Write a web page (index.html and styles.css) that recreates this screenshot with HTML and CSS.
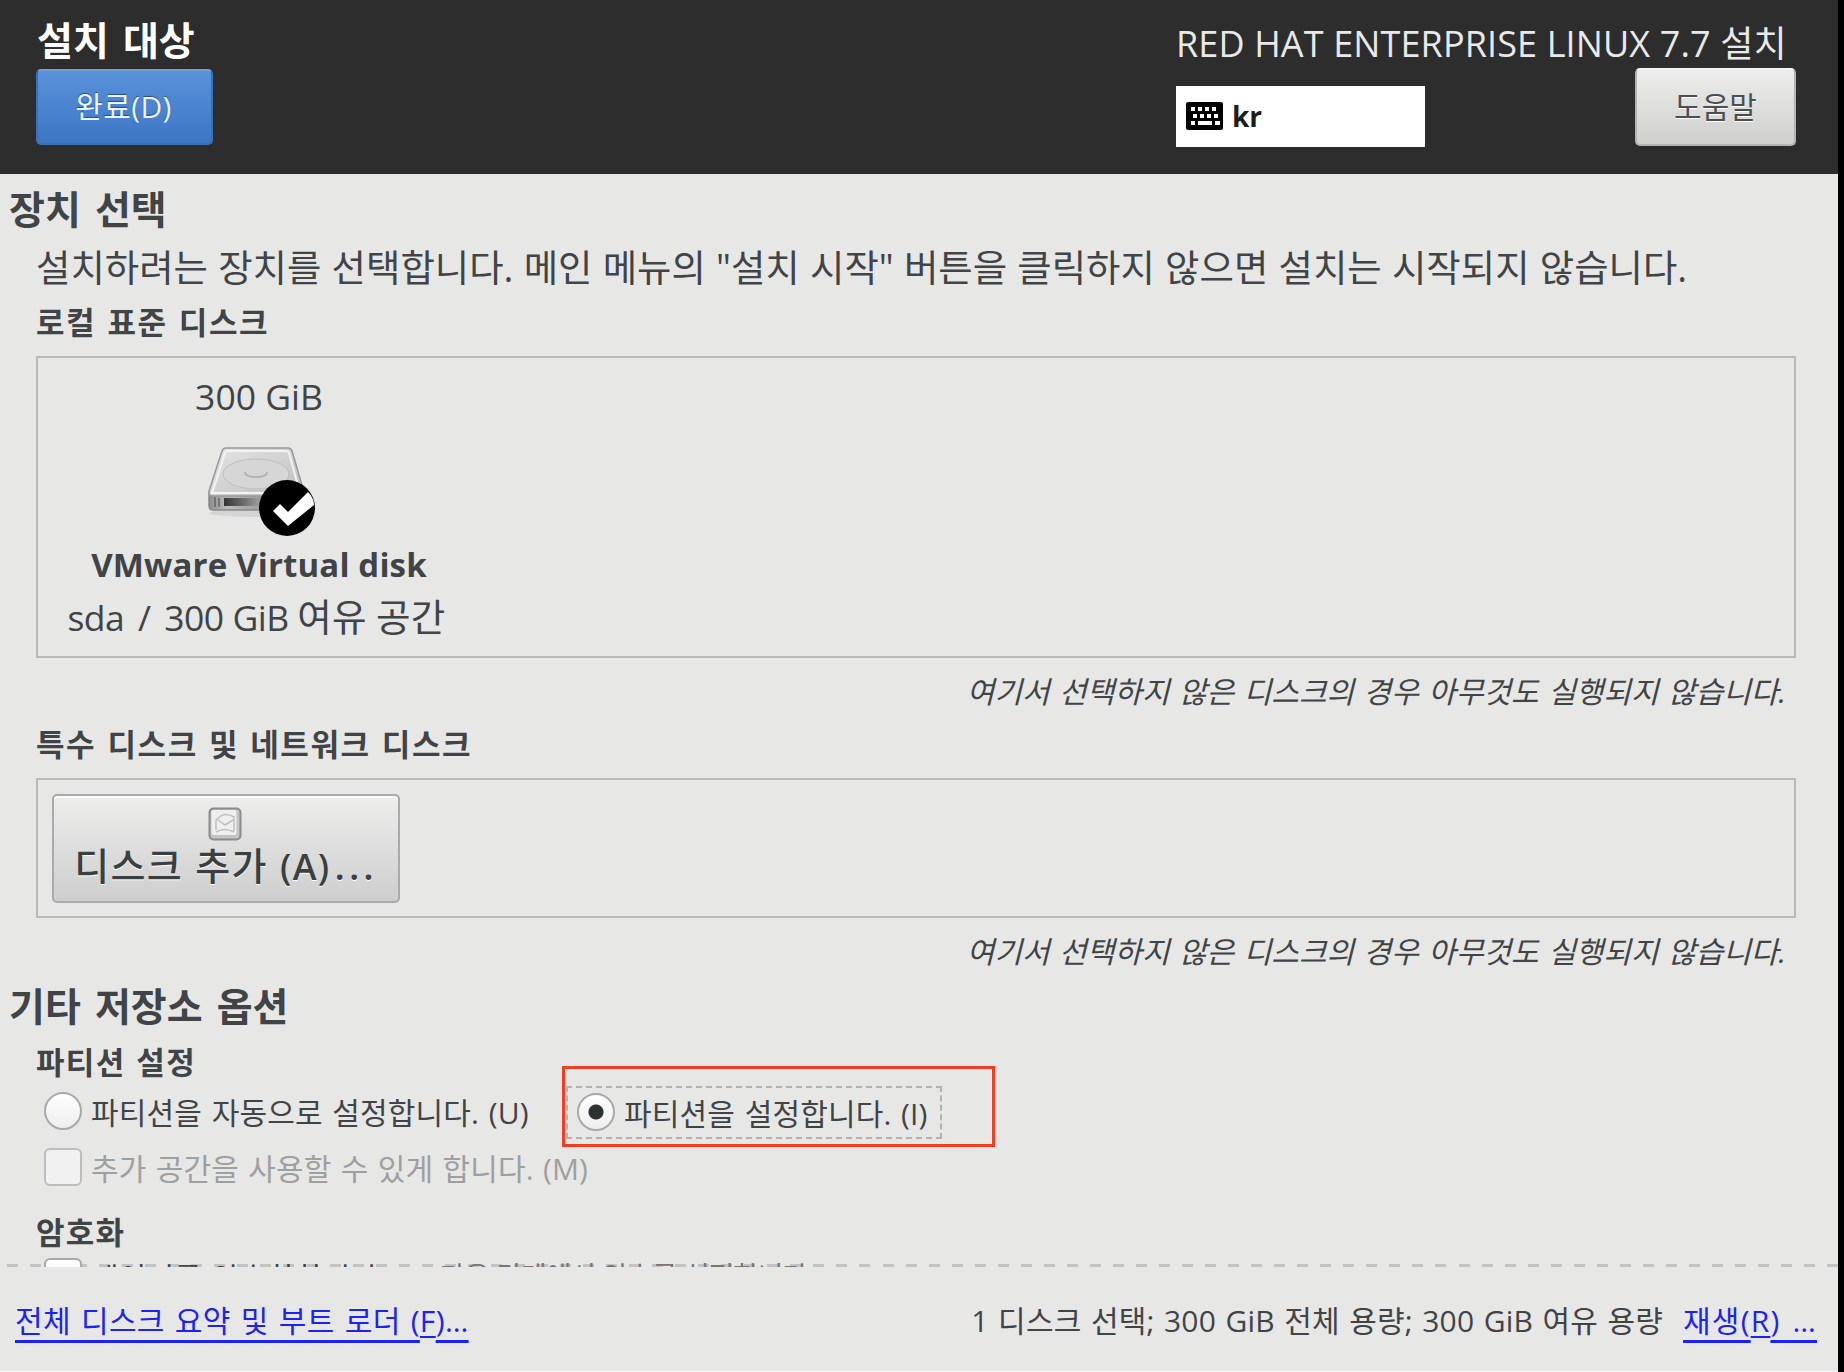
FILE: index.html
```html
<!DOCTYPE html>
<html lang="ko">
<head>
<meta charset="utf-8">
<title>설치 대상</title>
<link rel="stylesheet" href="styles.css">
</head>
<body>
<div class="installer">
  <header class="topbar">
    <div class="topbar-left">
      <h1 class="title"><span class="t">설치 대상</span></h1>
      <button class="btn btn-done"><span class="t">완료(D)</span></button>
    </div>
    <div class="topbar-right">
      <div class="product"><span class="t">RED HAT ENTERPRISE LINUX 7.7 설치</span></div>
      <div class="tools">
        <div class="layout-box">
          <svg class="kbd" viewBox="0 0 37 28"><rect width="37" height="28" rx="2" fill="#000"/><g fill="#fff"><path d="M5 5h4v4H5zM12 5h4v4h-4zM19 5h4v4h-4zM26 5h4v4h-4zM7 12h4v4H7zM14 12h4v4h-4zM21 12h4v4h-4zM28 12h4v4h-4zM5 19h4v4H5zM12 19h14v4H12zM29 19h5v4h-5z"/></g></svg>
          <span class="t">kr</span>
        </div>
        <button class="btn btn-help"><span class="t">도움말</span></button>
      </div>
    </div>
  </header>
  <main class="content">
    <h2 class="section-title"><span class="t">장치 선택</span></h2>
    <p class="desc"><span class="t">설치하려는 장치를 선택합니다. 메인 메뉴의 "설치 시작" 버튼을 클릭하지 않으면 설치는 시작되지 않습니다.</span></p>
    <h3 class="sub sub-local"><span class="t">로컬 표준 디스크</span></h3>
    <div class="panel panel-local">
      <div class="disk">
        <div class="disk-size"><span class="t">300 GiB</span></div>
        <svg class="disk-icon" viewBox="0 0 112 96">
          <defs>
            <linearGradient id="top" x1="0" y1="0" x2="1" y2="1"><stop offset="0" stop-color="#e4e4e4"/><stop offset=".5" stop-color="#d2d2d2"/><stop offset="1" stop-color="#bdbdbd"/></linearGradient>
            <linearGradient id="front" x1="0" y1="0" x2="1" y2="0"><stop offset="0" stop-color="#8f8f8f"/><stop offset=".2" stop-color="#bbb"/><stop offset="1" stop-color="#777"/></linearGradient>
            <linearGradient id="slot" x1="0" y1="0" x2="1" y2="0"><stop offset="0" stop-color="#333"/><stop offset="1" stop-color="#aaa"/></linearGradient>
          </defs>
          <ellipse cx="50" cy="67" rx="48" ry="4" fill="#000" opacity=".08"/>
          <path d="M2 48h94v12q0 4-4 4H6q-4 0-4-4z" fill="url(#front)" stroke="#888" stroke-width="1.500"/>
          <path d="M19 2h62q3 0 4 3L97 46q0 4-4 4H6q-5 0-4-5L15 5q1-3 4-3z" fill="url(#top)" stroke="#989898" stroke-width="1.500"/>
          <path d="M20 5h59q2 0 3 2l11 40H5L18 7q.5-2 2-2z" fill="none" stroke="#f3f3f3" stroke-width="2"/>
          <ellipse cx="49" cy="28" rx="33" ry="15" fill="#d6d6d6" stroke="#bfbfbf"/>
          <path d="M38 26q0 5 11 5t11-5" fill="none" stroke="#aaa" stroke-width="1.500"/>
          <path d="M17 52h40v8H17z" fill="url(#slot)"/>
          <path d="M8 51v10M12 52v9" stroke="#666" stroke-width="1.500"/>
          <circle cx="80" cy="62" r="28" fill="#000"/>
          <path d="M66 65l7-7 8 8 20-20q6 6 6 13L81 80z" fill="#fff"/>
        </svg>
        <div class="disk-name"><span class="t">VMware Virtual disk</span></div>
        <div class="disk-info"><span class="t">sda <span class="slash">/</span> 300 GiB <span class="free">여유 공간</span></span></div>
      </div>
    </div>
    <p class="note"><span class="t">여기서 선택하지 않은 디스크의 경우 아무것도 실행되지 않습니다.</span></p>
    <h3 class="sub sub-special"><span class="t">특수 디스크 및 네트워크 디스크</span></h3>
    <div class="panel panel-special">
      <button class="btn btn-add">
        <svg class="add-icon" viewBox="0 0 34 34"><rect x="1.500" y="1.500" width="31" height="31" rx="4" fill="#c4c4c4" stroke="#8c8c8c" stroke-width="2"/><rect x="3.500" y="3" width="25" height="25" rx="2" fill="#efefef"/><path d="M8 23V13q8-9 18-3M9 12l8 6 8-5M8 25q8-5 18 0M26 9v15" fill="none" stroke="#c0c0c0" stroke-width="1.500"/></svg>
        <span class="t">디스크 추가 <span class="key">(A)</span><span class="dots">...</span></span>
      </button>
    </div>
    <p class="note"><span class="t">여기서 선택하지 않은 디스크의 경우 아무것도 실행되지 않습니다.</span></p>
    <h2 class="section-title other"><span class="t">기타 저장소 옵션</span></h2>
    <h3 class="sub sub-part"><span class="t">파티션 설정</span></h3>
    <div class="options">
      <label class="option opt-auto"><i class="radio"></i><span class="t">파티션을 자동으로 설정합니다. (U)</span></label>
      <div class="highlight">
        <label class="option opt-manual"><i class="radio on"></i><span class="t">파티션을 설정합니다. (I)</span></label>
      </div>
    </div>
    <label class="option opt-extra disabled"><i class="check"></i><span class="t">추가 공간을 사용할 수 있게 합니다. (M)</span></label>
    <h3 class="sub sub-crypt"><span class="t">암호화</span></h3>
    <label class="option opt-crypt"><i class="check"></i><span class="t">데이터를 암호화합니다. (E)</span><small class="hint">다음 단계에서 암호를 설정합니다.</small></label>
  </main>
  <footer class="footer">
    <a class="link link-summary"><span class="t">전체 디스크 요약 및 부트 로더 (<u>F</u>)…</span></a>
    <div class="status">
      <span class="t status-text">1 디스크 선택; 300 GiB 전체 용량; 300 GiB 여유 용량</span>
      <a class="link link-reload"><span class="t">재생(<u>R</u>) …</span></a>
    </div>
  </footer>
</div>
</body>
</html>
```
FILE: styles.css
```css
* { box-sizing: border-box; }
body {
  margin: 0;
  width: 1844px;
  height: 1372px;
  background: #000;
  color: #414446;
  font-family: "Open Sans", "Noto Sans CJK KR", sans-serif;
  overflow: hidden;
}
h1, h2, h3, p { margin: 0; }
.t, .hint { white-space: nowrap; }

.installer {
  width: 1838px;
  height: 1372px;
  background: #e7e7e6;
  border-bottom: 1px solid #f8f8f8;
  display: flex;
  flex-direction: column;
}

/* header */
.topbar {
  flex: none;
  height: 174px;
  background: #2d2d2d;
  padding: 16px 42px 0 36px;
  display: flex;
  justify-content: space-between;
}
.title {
  height: 53px;
  line-height: 48px;
  font-size: 39px;
  font-weight: 700;
  word-spacing: 4px;
  color: #fff;
  padding-left: 1px;
}
.btn {
  display: flex;
  align-items: center;
  justify-content: center;
  padding: 0;
  font-family: inherit;
  border-radius: 5px;
}
.btn-done {
  width: 177px;
  height: 76px;
  padding: 0 2px 5px 0;
  font-size: 30px;
  letter-spacing: .4px;
  color: #eef4fb;
  background: linear-gradient(#5a92da, #3c76c4);
  border: 2px solid #3a70ba;
  border-top-color: #6f9fdc;
  text-shadow: 0 -1px 1px #234f8b;
}
.topbar-right { width: 620px; }
.product {
  height: 52px;
  line-height: 56px;
  font-size: 36px;
  letter-spacing: .12px;
  color: #e9e9e9;
}
.tools {
  display: flex;
  justify-content: space-between;
}
.layout-box {
  width: 249px;
  height: 61px;
  margin-top: 18px;
  padding: 0 0 2px 10px;
  background: #fff;
  color: #1d1d1d;
  display: flex;
  align-items: center;
  gap: 9px;
  font-size: 28px;
  font-weight: 700;
}
.kbd { width: 37px; height: 28px; }
.btn-help {
  width: 161px;
  height: 78px;
  padding-bottom: 4px;
  font-size: 30px;
  color: #4a5052;
  background: linear-gradient(#ededec, #cfcfcd);
  border: 2px solid #b4b4b2;
  border-top-color: #f5f5f5;
  text-shadow: 0 1px 0 #fff;
}

/* content */
.content {
  flex: none;
  height: 1093px;
  overflow: hidden;
  padding: 10px 42px 0 36px;
  background:
    repeating-linear-gradient(90deg, #c3c3c3 0 11px, transparent 11px 23.04px) 6.600px 1090px / 100% 3px no-repeat;
}
.section-title {
  height: 50px;
  line-height: 50px;
  margin-left: -27px;
  font-size: 39px;
  font-weight: 700;
  word-spacing: 4px;
}
.desc {
  height: 50px;
  line-height: 50px;
  margin-top: 9px;
  font-size: 37.400px;
  word-spacing: .5px;
}
.sub {
  height: 40px;
  line-height: 40px;
  font-size: 31px;
  font-weight: 700;
  letter-spacing: 1.600px;
  word-spacing: 1.500px;
}
.sub-local { margin-top: 9px; }
.panel {
  border: 2px solid #b9b9b9;
  width: 1760px;
}
.panel-local {
  height: 302px;
  margin-top: 14px;
  padding: 13px 0 0 20px;
}
.disk {
  width: 402px;
  display: flex;
  flex-direction: column;
  align-items: center;
}
.disk-size, .disk-info { height: 50px; line-height: 50px; font-size: 35.500px; }
.disk-icon { width: 112px; height: 96px; margin: 25px 0 0 7px; }
.disk-name {
  height: 50px;
  line-height: 50px;
  margin-top: -2px;
  font-size: 33px;
  font-weight: 700;
  letter-spacing: .15px;
}
.disk-info { margin-top: 2px; margin-left: -5px; letter-spacing: -.5px; }
.slash { margin: 0 5px; }
.free { font-size: 37.500px; letter-spacing: .3px; word-spacing: -1px; }
.note {
  height: 40px;
  line-height: 40px;
  margin-top: 14px;
  font-size: 30px;
  font-style: italic;
  word-spacing: 1.700px;
  text-align: right;
  padding-right: 10px;
}
.sub-special { margin-top: 12px; }
.panel-special {
  height: 140px;
  margin-top: 14px;
  padding: 14px 0 0 14px;
}
.btn-add {
  width: 348px;
  height: 109px;
  flex-direction: column;
  justify-content: flex-start;
  padding: 11px 0 0 0;
  font-size: 38px;
  font-weight: 500;
  line-height: 48px;
  letter-spacing: 1.300px;
  word-spacing: 1px;
  color: #3a3f41;
  background: linear-gradient(#ededec, #cecece);
  border: 2px solid #aaa;
  box-shadow: inset 0 2px 0 #fafafa;
  text-shadow: 0 1px 0 #fff;
}
.key { font-weight: 600; font-size: 36px; }
.dots { font-weight: 600; letter-spacing: 4px; margin-left: 4px; }
.add-icon { width: 34px; height: 34px; flex: none; margin-right: 2px; }
.other { margin-top: 9px; }
.sub-part { margin-top: 11px; letter-spacing: 1.300px; }
.options {
  display: flex;
  height: 81px;
  margin-top: -16px;
}
.option {
  display: flex;
  align-items: center;
  gap: 9px;
  font-size: 30px;
  letter-spacing: .15px;
  word-spacing: 1.700px;
}
.radio, .check {
  flex: none;
  width: 38px;
  height: 38px;
  border: 2px solid #a9a9a9;
  background: linear-gradient(#fff, #eee);
}
.radio { border-radius: 50%; }
.check { border-radius: 6px; }
.radio.on { background: radial-gradient(circle, #2e3132 0 7px, transparent 8px), linear-gradient(#fff, #eee); }
.opt-auto { width: 526px; padding: 9px 0 0 8px; }
.highlight {
  width: 433px;
  height: 81px;
  border: 3px solid #f03e22;
  padding: 17px 0 0 1px;
}
.opt-manual {
  width: 376px;
  height: 53px;
  border: 2px dashed #b2b2b2;
  padding: 0 0 2px 9px;
}
.opt-extra { height: 42px; padding: 0 0 2px 8px; word-spacing: 1.300px; }
.disabled { color: #9d9fa0; }
.disabled .check { border-color: #bdbdbd; background: #f1f1f1; }
.sub-crypt { margin-top: 23px; letter-spacing: 1.200px; }
.opt-crypt { height: 42px; margin-top: 4px; padding-left: 8px; }
.opt-crypt .t, .hint { padding-bottom: 2px; }
.hint { font-size: 28px; line-height: 36px; padding-bottom: 3px; letter-spacing: -1.200px; color: #777; }

/* footer */
.footer {
  flex: 1;
  display: flex;
  justify-content: space-between;
  padding: 30px 21px 0 15px;
  font-size: 30px;
  line-height: 48px;
  letter-spacing: .35px;
  word-spacing: 1.900px;
}
.status { display: flex; gap: 20px; }
.status-text { letter-spacing: .2px; word-spacing: 1.400px; }
.link { color: #1c22f5; }
.link .t {
  text-decoration: underline 3px;
  text-underline-offset: 8px;
  text-decoration-skip-ink: none;
}
.link u {
  display: inline-block;
  text-decoration: underline 2px;
  text-underline-offset: 4px;
}
.link-reload { letter-spacing: 1.200px; word-spacing: 3px; }
```
